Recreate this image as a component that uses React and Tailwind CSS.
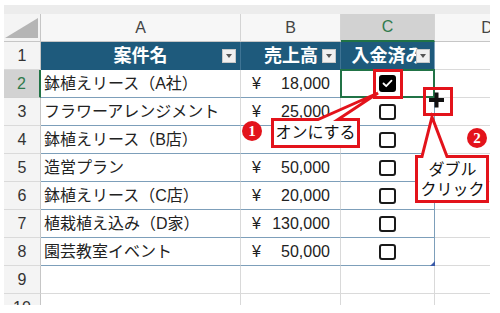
import React from "react";

// data rows of the table (row 2 - 8), row 4's amount sits under the callout
const rows = [
  { name: "鉢植えリース（A社）", amount: "18,000", paid: true },
  { name: "フラワーアレンジメント", amount: "25,000", paid: false },
  { name: "鉢植えリース（B店）", amount: "", paid: false },
  { name: "造営プラン", amount: "50,000", paid: false },
  { name: "鉢植えリース（C店）", amount: "20,000", paid: false },
  { name: "植栽植え込み（D家）", amount: "130,000", paid: false },
  { name: "園芸教室イベント", amount: "50,000", paid: false },
];

const FilterButton = () => (
  <div className="absolute right-[4px] top-[7px] w-[14px] h-[14px] bg-[#f0f0f0] border border-[#c8c8c8] flex items-center justify-center">
    <div className="w-0 h-0 border-l-[3.5px] border-r-[3.5px] border-t-[4px] border-l-transparent border-r-transparent border-t-[#555]" />
  </div>
);

const CheckBox = ({ checked }) =>
  checked ? (
    <div className="w-[17px] h-[17px] rounded-[3px] bg-black flex items-center justify-center">
      <svg width="11" height="9" viewBox="0 0 11 9">
        <path d="M1.5 4.5 L4.2 7.2 L9.5 1.6" fill="none" stroke="white" strokeWidth="1.8" strokeLinecap="round" strokeLinejoin="round" />
      </svg>
    </div>
  ) : (
    <div className="w-[17px] h-[16px] rounded-[3px] border-2 border-[#1a1a1a]" />
  );

const RowNum = ({ n, selected }) => (
  <div
    className={
      selected
        ? "flex items-center justify-center bg-[#d2d2d2] text-[#2f7a4c] border-r-2 border-r-[#217346] border-b border-b-[#d0d0d0]"
        : "flex items-center justify-center bg-[#f4f4f4] text-[#333] border-r border-r-[#c6c6c6] border-b border-b-[#dadada]"
    }
  >
    {n}
  </div>
);

export default function App() {
  return (
    <div
      className="relative w-[500px] h-[313px] bg-white overflow-hidden text-[16px]"
      style={{ fontFamily: '"Liberation Sans", "Noto Sans CJK JP", sans-serif' }}
    >
      <div className="ml-[4px] mt-[5px] w-[486px] h-[300px] overflow-hidden">
        <div className="h-[9px] bg-[#ececec]" />
        <div className="grid grid-cols-[37px_200px_100px_94px_104px] auto-rows-[28px] bg-white">
          {/* column header */}
          <div className="relative bg-[#f4f4f4] border-r border-r-[#c6c6c6] border-b border-b-[#c6c6c6]">
            <svg className="absolute left-[1px] top-[4px]" width="33" height="20" viewBox="0 0 33 20">
              <polygon points="0,20 33,0 33,20" fill="#b5b5b5" />
            </svg>
          </div>
          <div className="flex items-center justify-center bg-[#f7f7f7] text-[#444] border-r border-r-[#d4d4d4] border-b border-b-[#c6c6c6]">A</div>
          <div className="flex items-center justify-center bg-[#f7f7f7] text-[#444] border-r border-r-[#d4d4d4] border-b border-b-[#c6c6c6]">B</div>
          <div className="flex items-center justify-center bg-[#d2d2d2] text-[#2f7a4c] border-r border-r-[#d4d4d4] border-b-2 border-b-[#217346]">C</div>
          <div className="flex items-center justify-center bg-[#f7f7f7] text-[#444] border-b border-b-[#c6c6c6]">D</div>

          {/* table header row */}
          <RowNum n="1" />
          <div className="relative flex items-center justify-center bg-[#1e5a7c] text-white font-bold text-[18px] border-r border-r-[#3f7494]">
            案件名
            <FilterButton />
          </div>
          <div className="relative flex items-center justify-end pr-[22px] bg-[#1e5a7c] text-white font-bold text-[18px] border-r border-r-[#3f7494]">
            売上高
            <FilterButton />
          </div>
          <div className="relative flex items-center justify-center overflow-hidden whitespace-nowrap bg-[#1e5a7c] text-white font-bold text-[18px] border-r border-r-[#7d9fba]">
            入金済み
            <FilterButton />
          </div>
          <div className="border-b border-b-[#dadada]" />

          {/* data rows */}
          {rows.map((r, i) => (
            <React.Fragment key={i}>
              <RowNum n={i + 2} selected={i === 0} />
              <div className="flex items-center pl-[3px] whitespace-nowrap overflow-hidden text-[#222] border-r border-r-[#d9d9d9] border-b border-b-[#7d9fba]">
                {r.name}
              </div>
              <div className="flex items-center justify-between pl-[11px] pr-[10px] text-[#222] border-r border-r-[#d9d9d9] border-b border-b-[#7d9fba]">
                {r.amount && (
                  <>
                    <span>¥</span>
                    <span>{r.amount}</span>
                  </>
                )}
              </div>
              <div className="relative flex items-center justify-center pr-[1px] border-r border-r-[#7d9fba] border-b border-b-[#7d9fba]">
                <CheckBox checked={r.paid} />
                {i === 0 && <div className="absolute -left-px -top-px -right-px -bottom-px border-2 border-[#217346]" />}
                {i === rows.length - 1 && (
                  <svg className="absolute right-[-1px] bottom-[-1px]" width="5" height="5" viewBox="0 0 5 5">
                    <polygon points="5,0 5,5 0,5" fill="#3a5aa8" />
                  </svg>
                )}
              </div>
              <div className="border-b border-b-[#dadada]" />
            </React.Fragment>
          ))}

          {/* empty rows */}
          {[9, 10].map((n) => (
            <React.Fragment key={n}>
              <RowNum n={n} />
              <div className="border-r border-r-[#d9d9d9] border-b border-b-[#dadada]" />
              <div className="border-r border-r-[#d9d9d9] border-b border-b-[#dadada]" />
              <div className="border-r border-r-[#d9d9d9] border-b border-b-[#dadada]" />
              <div className="border-b border-b-[#dadada]" />
            </React.Fragment>
          ))}
        </div>
      </div>

      {/* annotations */}
      <svg className="absolute left-0 top-0 pointer-events-none" width="500" height="313" viewBox="0 0 500 313">
        <rect x="374.5" y="70.5" width="27" height="27" fill="none" stroke="#e3131b" strokeWidth="3" />
        <rect x="424.5" y="88.5" width="27" height="26" fill="none" stroke="#e3131b" strokeWidth="3" />
        <rect x="429" y="98" width="15" height="4" fill="#111" />
        <rect x="434.5" y="92.5" width="4" height="15" fill="#111" />
        <path d="M272.5 119.5 L318 119.5 L378 93 L338 119.5 L358.5 119.5 L358.5 146.5 L272.5 146.5 Z" fill="white" stroke="#e3131b" strokeWidth="3" strokeLinejoin="miter" />
        <path d="M416.5 156.5 L422 156.5 L432 117 L447 156.5 L487.5 156.5 L487.5 201.5 L416.5 201.5 Z" fill="white" stroke="#e3131b" strokeWidth="3" strokeLinejoin="miter" />
      </svg>

      <div className="absolute left-[272px] top-[119px] w-[87px] h-[28px] flex items-center justify-center text-[16px] text-[#111]">
        オンにする
      </div>
      <div className="absolute left-[417px] top-[157px] w-[71px] h-[45px] flex flex-col items-center justify-center leading-[20px] text-[16px] text-[#111]">
        <span>ダブル</span>
        <span>クリック</span>
      </div>

      <div
        className="absolute left-[242px] top-[121px] w-[20px] h-[20px] rounded-full bg-[#e3131b] flex items-center justify-center text-white font-bold text-[15px]"
        style={{ fontFamily: '"Liberation Serif", serif' }}
      >
        1
      </div>
      <div
        className="absolute left-[467px] top-[128px] w-[20px] h-[20px] rounded-full bg-[#e3131b] flex items-center justify-center text-white font-bold text-[15px]"
        style={{ fontFamily: '"Liberation Serif", serif' }}
      >
        2
      </div>
    </div>
  );
}
